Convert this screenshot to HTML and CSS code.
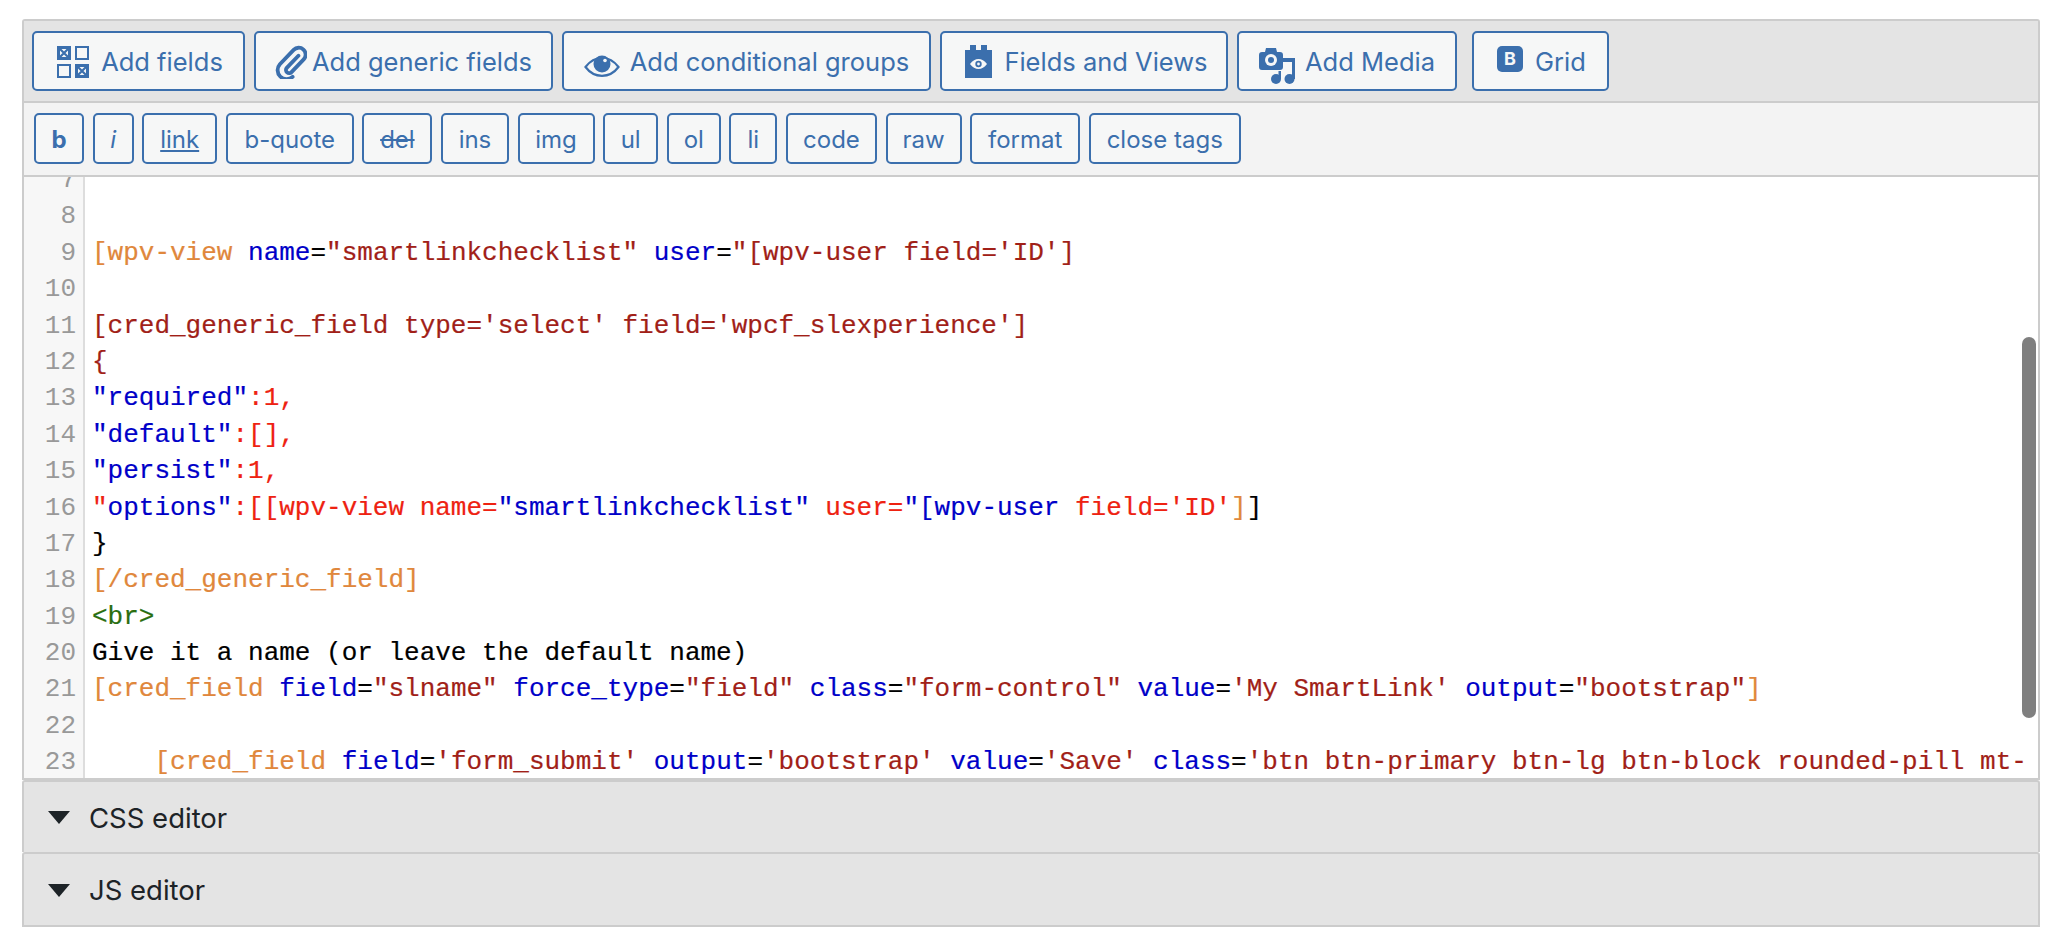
FILE: index.html
```html
<!DOCTYPE html>
<html lang="en">
<head>
<meta charset="utf-8">
<title>Editor</title>
<link rel="stylesheet" href="styles.css">
</head>
<body>
<div class="editor-box">
  <div class="toolbar-main">
    <button class="btn w-fields"><svg class="ico" width="32" height="32" viewBox="0 0 32 32"><g fill="none" stroke="#3b6fad"><rect x="1" y="1" width="12" height="12" stroke-width="2"/><rect x="19" y="1" width="12" height="12" stroke-width="2"/><rect x="1" y="19" width="12" height="12" stroke-width="2"/><rect x="19" y="19" width="12" height="12" stroke-width="2"/><rect x="1.5" y="1.5" width="11" height="11" stroke-width="3"/><rect x="19.5" y="19.5" width="11" height="11" stroke-width="3"/><path d="M3 3l8 8M11 3l-8 8M21 21l8 8M29 21l-8 8" stroke-width="2.2"/></g></svg>Add fields</button>
    <button class="btn w-generic"><svg class="ico clip" width="32" height="36" viewBox="0 0 30 34"><path d="M22 12L11 23.5a3 3 0 0 0 4.5 4L27 15.5a6.500 6.500 0 0 0-9.500-9L4.500 20a8.500 8.500 0 0 0 12 12" fill="none" stroke="#3b6fad" stroke-width="3.6" stroke-linecap="round"/></svg>Add generic fields</button>
    <button class="btn w-cond"><svg class="ico eye" width="36" height="22" viewBox="0 0 36 22"><path d="M1.500 12C6 6 11.500 3 18 3s12 3 16.500 9C30 18 24.500 20.800 18 20.800S6 18 1.500 12z" fill="none" stroke="#3b6fad" stroke-width="2.2"/><circle cx="18" cy="9" r="8.500" fill="#3b6fad"/><circle cx="21" cy="5.500" r="1.800" fill="#f6f7f7"/></svg>Add conditional groups</button>
    <button class="btn w-views"><svg class="ico" width="27" height="33" viewBox="0 0 27 33"><path d="M0 5h5V0h6v5h5V0h6v5h5v28H0z" fill="#3b6fad"/><path d="M5 19c2.500-3.500 5.500-5 8.500-5s6 1.500 8.500 5c-2.500 3.500-5.500 5-8.500 5s-6-1.500-8.500-5z" fill="#f6f7f7"/><circle cx="13.500" cy="19" r="3.200" fill="#3b6fad"/><circle cx="13.500" cy="19" r="1.400" fill="#f6f7f7"/></svg>Fields and Views</button>
    <button class="btn w-media"><svg class="ico media" width="36" height="36" viewBox="0 0 36 36"><path d="M6 4l1-4h10l1 4h3c2 0 3 1 3 3v12c0 2-1 3-3 3H3c-2 0-3-1-3-3V7c0-2 1-3 3-3z" fill="#3b6fad"/><circle cx="12" cy="12" r="6" fill="#f6f7f7"/><circle cx="12" cy="12" r="3" fill="#3b6fad"/><circle cx="17" cy="31" r="5" fill="#3b6fad"/><path d="M19.500 23h2.500v8h-2.500z" fill="#3b6fad"/><circle cx="30.500" cy="31" r="5" fill="#3b6fad"/><path d="M24 10h12v21h-3V14h-9z" fill="#3b6fad"/></svg>Add Media</button>
    <button class="btn w-grid"><span class="boot">B</span>Grid</button>
  </div>
  <div class="toolbar-quick">
    <button class="qt qt-b">b</button>
    <button class="qt qt-i">i</button>
    <button class="qt qt-link">link</button>
    <button class="qt qt-quote">b-quote</button>
    <button class="qt qt-del">del</button>
    <button class="qt qt-ins">ins</button>
    <button class="qt qt-img">img</button>
    <button class="qt qt-ul">ul</button>
    <button class="qt qt-ol">ol</button>
    <button class="qt qt-li">li</button>
    <button class="qt qt-code">code</button>
    <button class="qt qt-raw">raw</button>
    <button class="qt qt-format">format</button>
    <button class="qt qt-close">close tags</button>
  </div>
  <div class="code-view">
    <div class="code-scroll">
      <div class="ln"><span class="no">7</span><span class="src"></span></div>
      <div class="ln"><span class="no">8</span><span class="src"></span></div>
      <div class="ln"><span class="no">9</span><span class="src"><i class="o">[wpv-view</i> <i class="a">name</i>=<i class="s">"smartlinkchecklist"</i> <i class="a">user</i>=<i class="s">"[wpv-user field='ID']</i></span></div>
      <div class="ln"><span class="no">10</span><span class="src"></span></div>
      <div class="ln"><span class="no">11</span><span class="src"><i class="s">[cred_generic_field type='select' field='wpcf_slexperience']</i></span></div>
      <div class="ln"><span class="no">12</span><span class="src"><i class="s">{</i></span></div>
      <div class="ln"><span class="no">13</span><span class="src"><i class="a">"required"</i><i class="r">:1,</i></span></div>
      <div class="ln"><span class="no">14</span><span class="src"><i class="a">"default"</i><i class="r">:[],</i></span></div>
      <div class="ln"><span class="no">15</span><span class="src"><i class="a">"persist"</i><i class="r">:1,</i></span></div>
      <div class="ln"><span class="no">16</span><span class="src"><i class="r">"</i><i class="a">options"</i><i class="r">:[[wpv-view name=</i><i class="a">"smartlinkchecklist"</i> <i class="r">user=</i><i class="a">"[wpv-user</i> <i class="r">field='ID'</i><i class="o">]</i>]</span></div>
      <div class="ln"><span class="no">17</span><span class="src">}</span></div>
      <div class="ln"><span class="no">18</span><span class="src"><i class="o">[/cred_generic_field]</i></span></div>
      <div class="ln"><span class="no">19</span><span class="src"><i class="g">&lt;br&gt;</i></span></div>
      <div class="ln"><span class="no">20</span><span class="src">Give it a name (or leave the default name)</span></div>
      <div class="ln"><span class="no">21</span><span class="src"><i class="o">[cred_field</i> <i class="a">field</i>=<i class="s">"slname"</i> <i class="a">force_type</i>=<i class="s">"field"</i> <i class="a">class</i>=<i class="s">"form-control"</i> <i class="a">value</i>=<i class="s">'My SmartLink'</i> <i class="a">output</i>=<i class="s">"bootstrap"</i><i class="o">]</i></span></div>
      <div class="ln"><span class="no">22</span><span class="src"></span></div>
      <div class="ln"><span class="no">23</span><span class="src">    <i class="o">[cred_field</i> <i class="a">field</i>=<i class="s">'form_submit'</i> <i class="a">output</i>=<i class="s">'bootstrap'</i> <i class="a">value</i>=<i class="s">'Save'</i> <i class="a">class</i>=<i class="s">'btn btn-primary btn-lg btn-block rounded-pill mt-</i></span></div>
    </div>
    <div class="thumb"></div>
  </div>
</div>
<div class="panel"><span class="tri"></span>CSS editor</div>
<div class="panel panel-last"><span class="tri"></span>JS editor</div>
</body>
</html>
```

FILE: styles.css
```css
* { box-sizing: border-box; }
html, body { margin: 0; padding: 0; background: #fff; }
body { padding: 19px 22px 0; width: 2062px; height: 944px; overflow: hidden; font-family: Inter, "Liberation Sans", sans-serif; }
.editor-box { border: 2px solid #ccc; border-radius: 3px 3px 0 0; }
.toolbar-main { height: 82px; background: #e4e4e4; border-bottom: 2px solid #ccc; display: flex; align-items: flex-start; padding: 10px 0 0 8px; }
.toolbar-quick { height: 74px; background: #f3f3f3; border-bottom: 2px solid #ccc; display: flex; align-items: flex-start; gap: 8.6px; padding: 10px 0 0 10px; }
button { font-family: inherit; color: #3b6fad; background: #f6f7f7; border: 2px solid #3b6fad; border-radius: 5px; padding: 0; cursor: pointer; }
.btn { height: 60px; font-size: 25.5px; display: flex; align-items: center; justify-content: center; margin-right: 9px; padding-top: 1px; }
.w-fields { width: 213px; padding-left: 3px; }
.w-generic { width: 299px; }
.w-cond { width: 369px; }
.w-views { width: 288px; padding-left: 5px; }
.w-media { width: 220px; margin-right: 15px; }
.w-grid { width: 137px; padding-left: 2px; }
.ico { flex: none; margin-right: 12px; }
.clip { margin-top: -1px; margin-right: 5px; }
.eye { margin-top: 9px; margin-right: 10px; }
.media { margin-top: 8px; margin-right: 10px; }
.boot { width: 26px; height: 26px; background: #3b6fad; color: #f6f7f7; border-radius: 5px; font-size: 18px; font-weight: 700; display: flex; align-items: center; justify-content: center; margin: -6px 12px 0 0; }
.qt { height: 51px; font-size: 24px; padding: 2px 0 0; }
.qt-b { font-weight: 700; width: 50px; }
.qt-i { font-style: italic; width: 41px; }
.qt-link { text-decoration: underline; width: 75px; }
.qt-quote { width: 128px; }
.qt-del { text-decoration: line-through; width: 70px; }
.qt-ins { width: 68px; }
.qt-img { width: 77px; }
.qt-ul { width: 55px; }
.qt-ol { width: 54px; }
.qt-li { width: 48px; }
.qt-code { width: 91px; }
.qt-raw { width: 76px; }
.qt-format { width: 110px; }
.qt-close { width: 152px; }
.code-view { position: relative; height: 601px; overflow: hidden; background: #fff; font: 26px/36.4px "Liberation Mono", monospace; color: #000; -webkit-text-stroke: 0.2px; }
.code-scroll { margin-top: -15px; background: linear-gradient(to right, #f7f7f7 59px, #ddd 59px, #ddd 61px, #fff 61px); min-height: 700px; }
.ln { display: flex; height: 36.4px; white-space: pre; }
.no { width: 52px; flex: none; text-align: right; color: #999; -webkit-text-stroke: 0; }
.src { margin-left: 16px; }
.src i { font-style: normal; }
.o { color: #e0873c; }
.a { color: #0000c8; }
.s { color: #a11f18; }
.r { color: #ee2211; }
.g { color: #2a6e10; }
.thumb { position: absolute; right: 2px; top: 160px; width: 14px; height: 381px; background: #7f7f7f; border-radius: 7px; }
.panel { height: 72px; border: 2px solid #ccc; border-bottom: 0; border-radius: 3px 3px 0 0; background: #e4e4e4; color: #1d2327; font-size: 27.5px; display: flex; align-items: center; padding: 1px 0 0 24px; }
.panel-last { height: 75px; border-bottom: 2px solid #ccc; }
.tri { width: 0; height: 0; border-left: 11px solid transparent; border-right: 11px solid transparent; border-top: 13px solid #1d2327; margin-right: 19px; }
```
